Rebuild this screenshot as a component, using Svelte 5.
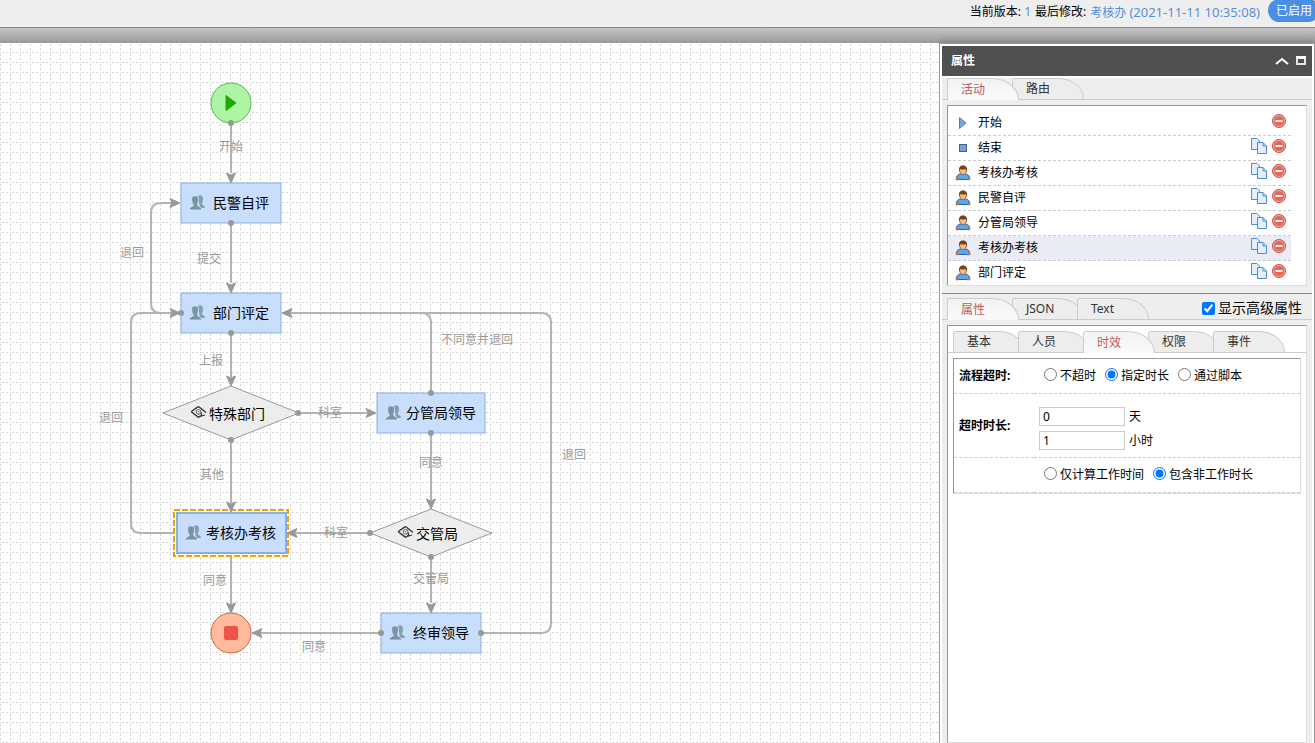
<script>
  const activities = [
    { name: '开始', kind: 'start', copy: false },
    { name: '结束', kind: 'end', copy: true },
    { name: '考核办考核', kind: 'user', copy: true },
    { name: '民警自评', kind: 'user', copy: true },
    { name: '分管局领导', kind: 'user', copy: true },
    { name: '考核办考核', kind: 'user', copy: true, selected: true },
    { name: '部门评定', kind: 'user', copy: true }
  ];
  const tasks = [
    { name: '民警自评', x: 181, y: 140, w: 100 },
    { name: '部门评定', x: 181, y: 250, w: 100 },
    { name: '分管局领导', x: 377, y: 350, w: 108 },
    { name: '考核办考核', x: 177, y: 470, w: 109, selected: true },
    { name: '终审领导', x: 381, y: 570, w: 100 }
  ];
  const gateways = [
    { name: '特殊部门', x: 231, y: 370, rx: 68, ry: 27, ix: 191, tx: 209 },
    { name: '交管局', x: 431, y: 490, rx: 61, ry: 24, ix: 398, tx: 416 }
  ];
  const edges = [
    'M231 80V130', 'M231 180V240', 'M231 290V334', 'M231 397V460', 'M231 511V561',
    'M298 370H367', 'M370 490H296', 'M431 390V457', 'M431 514V560', 'M381 590H260',
    'M181 270H161Q151 270 151 260V170Q151 160 161 160H172',
    'M176 490H141Q131 490 131 480V280Q131 270 141 270H172',
    'M431 350V280Q431 270 421 270H290',
    'M481 590H541Q551 590 551 580V280Q551 270 541 270H290'
  ];
  const dots = [[231, 80], [231, 180], [231, 290], [231, 397], [298, 370], [370, 490], [431, 390], [431, 514], [381, 590], [181, 270], [431, 350], [481, 590]];
  const arrows = [[231, 140, 90], [231, 250, 90], [231, 343, 90], [231, 469, 90], [231, 570, 90], [376, 370, 0], [287, 490, 180], [431, 466, 90], [431, 570, 90], [252, 590, 180], [180, 160, 0], [180, 270, 0], [282, 270, 180]];
  const labels = [
    ['开始', 231, 103], ['提交', 209, 215], ['退回', 132, 209], ['上报', 211, 317], ['退回', 111, 374], ['其他', 212, 431],
    ['同意', 215, 537], ['科室', 330, 369], ['不同意并退回', 477, 296], ['退回', 574, 411], ['同意', 431, 419], ['科室', 336, 489],
    ['交管局', 431, 535], ['同意', 314, 603]
  ];
  const innerTabs = ['基本', '人员', '时效', '权限', '事件'];
</script>

<div class="page">
  <header class="top">
    <span>当前版本: <a href="#version">1</a></span>
    <span>最后修改:</span>
    <a class="modified" href="#history">考核办 <span class="date">(2021-11-11 10:35:08)</span></a>
    <button class="enabled">已启用</button>
  </header>
  <div class="bar"></div>

  <div class="work">
    <main class="canvas">
      <svg class="diagram" role="img" aria-label="流程图">
        <defs>
          <pattern id="grid" width="10" height="10" patternUnits="userSpaceOnUse">
            <path d="M0 9.500H1M2 9.500H4M6 9.500H8M.500 1V3M.500 5V7" stroke="#d6d6d6" fill="none" />
          </pattern>
        </defs>
        <rect width="100%" height="100%" fill="url(#grid)" />
        {#each edges as d}<path class="edge" {d} />{/each}

        <circle cx="231" cy="60" r="20" fill="#aef4a5" stroke="#55b84e" stroke-width="1" />
        <path d="M226 52.500L236 60L226 67.500Z" fill="#1faa00" stroke="#1faa00" />
        <circle cx="231" cy="590" r="20" fill="#ffbb9b" stroke="#c8683e" stroke-width="1" />
        <rect x="224" y="583" width="14" height="14" rx="2" fill="#ed534b" />

        {#each gateways as g}
          <path class="gateway" d="M{g.x - g.rx} {g.y}L{g.x} {g.y - g.ry}L{g.x + g.rx} {g.y}L{g.x} {g.y + g.ry}Z" />
          <g transform="translate({g.ix} {g.y - 7})" fill="none" stroke="#333" stroke-width="1.400">
            <path d="M15 6.500L8.500 1.200Q7.500 .600 6.500 1.200L.800 5.200Q.300 5.700 .900 6.300L6.800 10.800Q7.500 11.200 8.300 10.800L10 9.600" />
            <path d="M10.500 6.500V10L14 9" stroke-width="1.200" />
            <circle cx="7.600" cy="5.800" r="2.300" stroke="#777" stroke-width="1.200" />
            <circle cx="7.600" cy="5.800" r=".800" fill="#777" stroke="none" />
          </g>
          <text class="name" x={g.tx} y={g.y + 6}>{g.name}</text>
        {/each}

        {#each tasks as t}
          {#if t.selected}<rect class="selection" x={t.x - 3} y={t.y - 3} width={t.w + 5} height="46" />{/if}
          <rect class="task" class:thick={t.selected} x={t.x} y={t.y} width={t.w} height="40" />
          <g transform="translate({t.x + 8} {t.y + 12})">
            <path d="M9 1.500C10 -.500 14.500 -.200 14 4.500C13.800 7 13 7.500 13 9C13.500 10.500 16 10.500 16 13H11Z" fill="#83a0ae" />
            <path d="M6 .800C9.600 .800 10 4 9.200 6.800C9 8.500 8.600 9 8.600 10C9 12 13 11.500 13 15H0C0 11.500 4 12 4.500 10C3.500 9 3 8 2.800 6C2 3 3 .800 6 .800Z" fill="#7895a3" stroke="#dbe9f8" stroke-width=".800" />
          </g>
          <text class="name" x={t.x + (t.w > 100 ? 29 : 32)} y={t.y + 25}>{t.name}</text>
        {/each}

        {#each dots as [x, y]}<circle cx={x} cy={y} r="3" fill="#999" />{/each}
        {#each arrows as [x, y, a]}<path d="M0 0L-10 -4.500L-8 0L-10 4.500Z" transform="translate({x} {y}) rotate({a})" fill="#999" stroke="#999" />{/each}
        {#each labels as [s, x, y]}<text class="label" {x} y={y + 5}>{s}</text>{/each}
      </svg>
    </main>

    <aside class="panel">
      <div class="title">
        <h2>属性</h2>
        <button aria-label="折叠"><svg width="14" height="8" viewBox="0 0 14 8"><path d="M1 7L7 2L13 7" fill="none" stroke="#fff" stroke-width="2" /></svg></button>
        <button aria-label="最大化"><svg width="12" height="10" viewBox="0 0 12 10"><path d="M2 1V8H10V1" fill="none" stroke="#e4e4ee" stroke-width="2" /><path d="M1 1.500H11" stroke="#fff" stroke-width="3" /></svg></button>
      </div>

      <div class="tabs">
        <button class="tab active">活动</button><button class="tab">路由</button>
      </div>
      <div class="listwrap">
        <ul class="list">
          {#each activities as a}
            <li class:selected={a.selected}>
              <svg width="16" height="16" viewBox="0 0 16 16">
                {#if a.kind === 'start'}
                  <path d="M4.500 2.500L11 8L4.500 13.500Z" fill="#78a6e2" stroke="#4f80c4" />
                {:else if a.kind === 'end'}
                  <rect x="4.500" y="4.500" width="7" height="7" fill="#7ba2cf" stroke="#39659b" />
                {:else}
                  <path d="M2 14.500Q1 10 5 9H11Q15 10 14 14.500Z" fill="#58a7f3" stroke="#2f5fb5" />
                  <path d="M1.500 11.500V14.500H4M14.500 11.500V14.500H12" fill="none" stroke="#b9774a" stroke-width="1.500" />
                  <path d="M4.500 5Q4.500 1 8 1Q11.500 1 11.500 5Q11 9.500 8 9.500Q5 9.500 4.500 5Z" fill="#f4be86" stroke="#9a6a3c" />
                  <path d="M4 6Q3.500 .500 8 .500Q12.500 .500 12 6L10.500 4Q8 5 5.500 4Z" fill="#7a421b" />
                {/if}
              </svg>
              <span>{a.name}</span>
              {#if a.copy}
                <button aria-label="复制"><svg width="16" height="16" viewBox="0 0 16 16" stroke="#5588cc" fill="#e3efff"><path d="M.500 .500H6L8.500 3V11.500H.500Z" /><path d="M6.500 4.500H12L15.500 8V15.500H6.500Z" /><path d="M12 4.500V8H15.500" fill="none" /></svg></button>
              {/if}
              <button aria-label="删除"><svg width="16" height="16" viewBox="0 0 16 16"><circle cx="8" cy="8" r="6.500" fill="#e9655a" stroke="#c9544c" /><circle cx="8" cy="8" r="5.500" fill="none" stroke="#f3a79f" /><rect x="4.500" y="7" width="7" height="2" fill="#fff" /></svg></button>
            </li>
          {/each}
        </ul>
      </div>

      <div class="tabs second">
        <button class="tab active">属性</button><button class="tab">JSON</button><button class="tab">Text</button>
        <label class="advanced"><input type="checkbox" checked />显示高级属性</label>
      </div>
      <div class="props">
        <div class="box">
          <div class="tabs inner">
            {#each innerTabs as t}<button class="tab" class:active={t === '时效'}>{t}</button>{/each}
          </div>
          <table>
            <tbody>
              <tr class="short">
                <th scope="row">流程超时:</th>
                <td><div class="radios">
                  <label><input type="radio" name="timeout" />不超时</label>
                  <label><input type="radio" name="timeout" checked />指定时长</label>
                  <label><input type="radio" name="timeout" />通过脚本</label>
                </div></td>
              </tr>
              <tr class="tall">
                <th scope="row">超时时长:</th>
                <td>
                  <label class="amount"><input type="text" value="0" />天</label>
                  <label class="amount"><input type="text" value="1" />小时</label>
                </td>
              </tr>
              <tr class="short">
                <th></th>
                <td><div class="radios">
                  <label><input type="radio" name="hours" />仅计算工作时间</label>
                  <label><input type="radio" name="hours" checked />包含非工作时长</label>
                </div></td>
              </tr>
            </tbody>
          </table>
        </div>
      </div>
    </aside>
  </div>
</div>

<style>
  :global(body) { margin: 0; }
  .page {
    height: 100vh;
    display: flex;
    flex-direction: column;
    overflow: hidden;
    background: #fff;
    font: 12px/16px "Noto Sans", "Noto Sans CJK SC", sans-serif;
    color: #000;
  }
  button, input { font: inherit; color: inherit; box-sizing: border-box; }
  button { border: 0; padding: 0; background: none; }
  a { color: #5590dd; text-decoration: none; }
  svg { display: block; }

  .top {
    height: 27px;
    display: flex;
    align-items: flex-start;
    justify-content: flex-end;
    gap: 4px;
    padding-top: 4px;
    box-sizing: border-box;
    background: #eee;
    white-space: nowrap;
  }
  .date { font-size: 13px; }
  .enabled {
    width: 52px;
    height: 23px;
    margin: -5px -5px 0 4px;
    border-radius: 12px;
    background: #4a90e2;
    color: #fff;
  }
  .bar {
    flex: none;
    height: 16px;
    box-sizing: border-box;
    border-top: 1px solid #888;
    background: linear-gradient(#c4c4c4, #999);
  }
  .work { flex: 1; min-height: 0; display: flex; }
  .canvas { flex: 1; min-width: 0; }
  .diagram { width: 100%; height: 100%; }
  .edge { fill: none; stroke: #b4b4b4; stroke-width: 2; }
  .gateway { fill: #ededed; stroke: #999; }
  .task { fill: #c8defc; stroke: #86b0e6; stroke-width: 1; }
  .task.thick { stroke-width: 2; }
  .selection { fill: #fff; stroke: #f5a000; stroke-width: 2; stroke-dasharray: 6 2; }
  .name { font-size: 14px; }
  .label { font-size: 12px; fill: #999; text-anchor: middle; }

  .panel {
    flex: none;
    width: 376px;
    box-sizing: border-box;
    display: flex;
    flex-direction: column;
    border: 1px solid #999;
    border-bottom: 0;
    padding: 2px 2px 0;
    background: #fff;
    box-shadow: 0 0 8px #777;
    clip-path: inset(-15px 0 0 0);
  }
  .title {
    flex: none;
    height: 30px;
    display: flex;
    align-items: center;
    gap: 6px;
    padding: 0 5px 0 9px;
    margin-bottom: 2px;
    background: #505050;
    color: #fff;
  }
  .title h2 { flex: 1; margin: 0; font-size: 12px; }
  .tabs {
    flex: none;
    height: 22px;
    box-sizing: border-box;
    display: flex;
    align-items: flex-start;
    padding-left: 5px;
    background: #eee;
    border-bottom: 1px solid #ccc;
  }
  .tab {
    flex: none;
    width: 72px;
    height: 21px;
    margin-right: -7px;
    padding-left: 13px;
    text-align: left;
    color: #333;
    background: #ededed;
    border: 1px solid #ccc;
    border-bottom: 0;
    border-radius: 3px 32px 0 0 / 3px 26px 0 0;
  }
  .tab.active {
    position: relative;
    z-index: 1;
    height: 22px;
    color: #c25a5a;
    background: linear-gradient(#f1f3f3, #fafafa);
  }
  .listwrap { flex: none; padding: 5px 5px 7px; background: #eee; }
  .list {
    margin: 0;
    padding: 5px 15px 0 0;
    list-style: none;
    background: #fff;
    border: 1px solid;
    border-color: #999 #ddd #ddd #999;
  }
  .list li {
    height: 25px;
    box-sizing: border-box;
    display: flex;
    align-items: center;
    gap: 4px;
    padding: 0 4px 0 7px;
    border-bottom: 1px dashed #ccc;
  }
  .list li:last-child { height: 24px; border-bottom: 0; }
  .list li.selected { background: #e9ecf5; }
  .list span { flex: 1; padding-left: 3px; }
  .list button { margin-bottom: 4px; }

  .second { height: 27px; padding-top: 4px; border-top: 1px solid #888; }
  .advanced {
    display: flex;
    align-items: center;
    gap: 3px;
    margin-left: auto;
    margin-right: 10px;
    height: 20px;
    font-size: 14px;
    white-space: nowrap;
  }
  .advanced input { width: 13px; height: 13px; margin: 0; }
  .props { flex: 1; display: flex; padding: 5px 5px 0; background: #eee; }
  .box {
    flex: 1;
    padding-top: 5px;
    background: #fff;
    border: 1px solid;
    border-color: #999 #ddd #ddd #999;
  }
  .inner { background: #fff; }
  table {
    width: calc(100% - 10px);
    margin: 5px;
    border-collapse: separate;
    border-spacing: 0;
    border: 1px solid;
    border-color: #999 #ddd #ddd #999;
  }
  th, td { padding: 0 0 0 5px; text-align: left; border-bottom: 1px dashed #ccc; }
  th { width: 75px; font-weight: 700; }
  .short { height: 35px; }
  .tall { height: 64px; }
  .tall td { padding-top: 6px; }
  .radios { display: flex; gap: 9px; padding-left: 5px; white-space: nowrap; }
  .radios label { display: flex; align-items: center; gap: 3px; }
  .radios input { width: 13px; height: 13px; margin: 0 0 3px; }
  .amount { display: flex; align-items: center; gap: 4px; height: 24px; }
  .amount input { width: 86px; height: 19px; padding: 0 3px; border: 1px solid #ccc; }
</style>
